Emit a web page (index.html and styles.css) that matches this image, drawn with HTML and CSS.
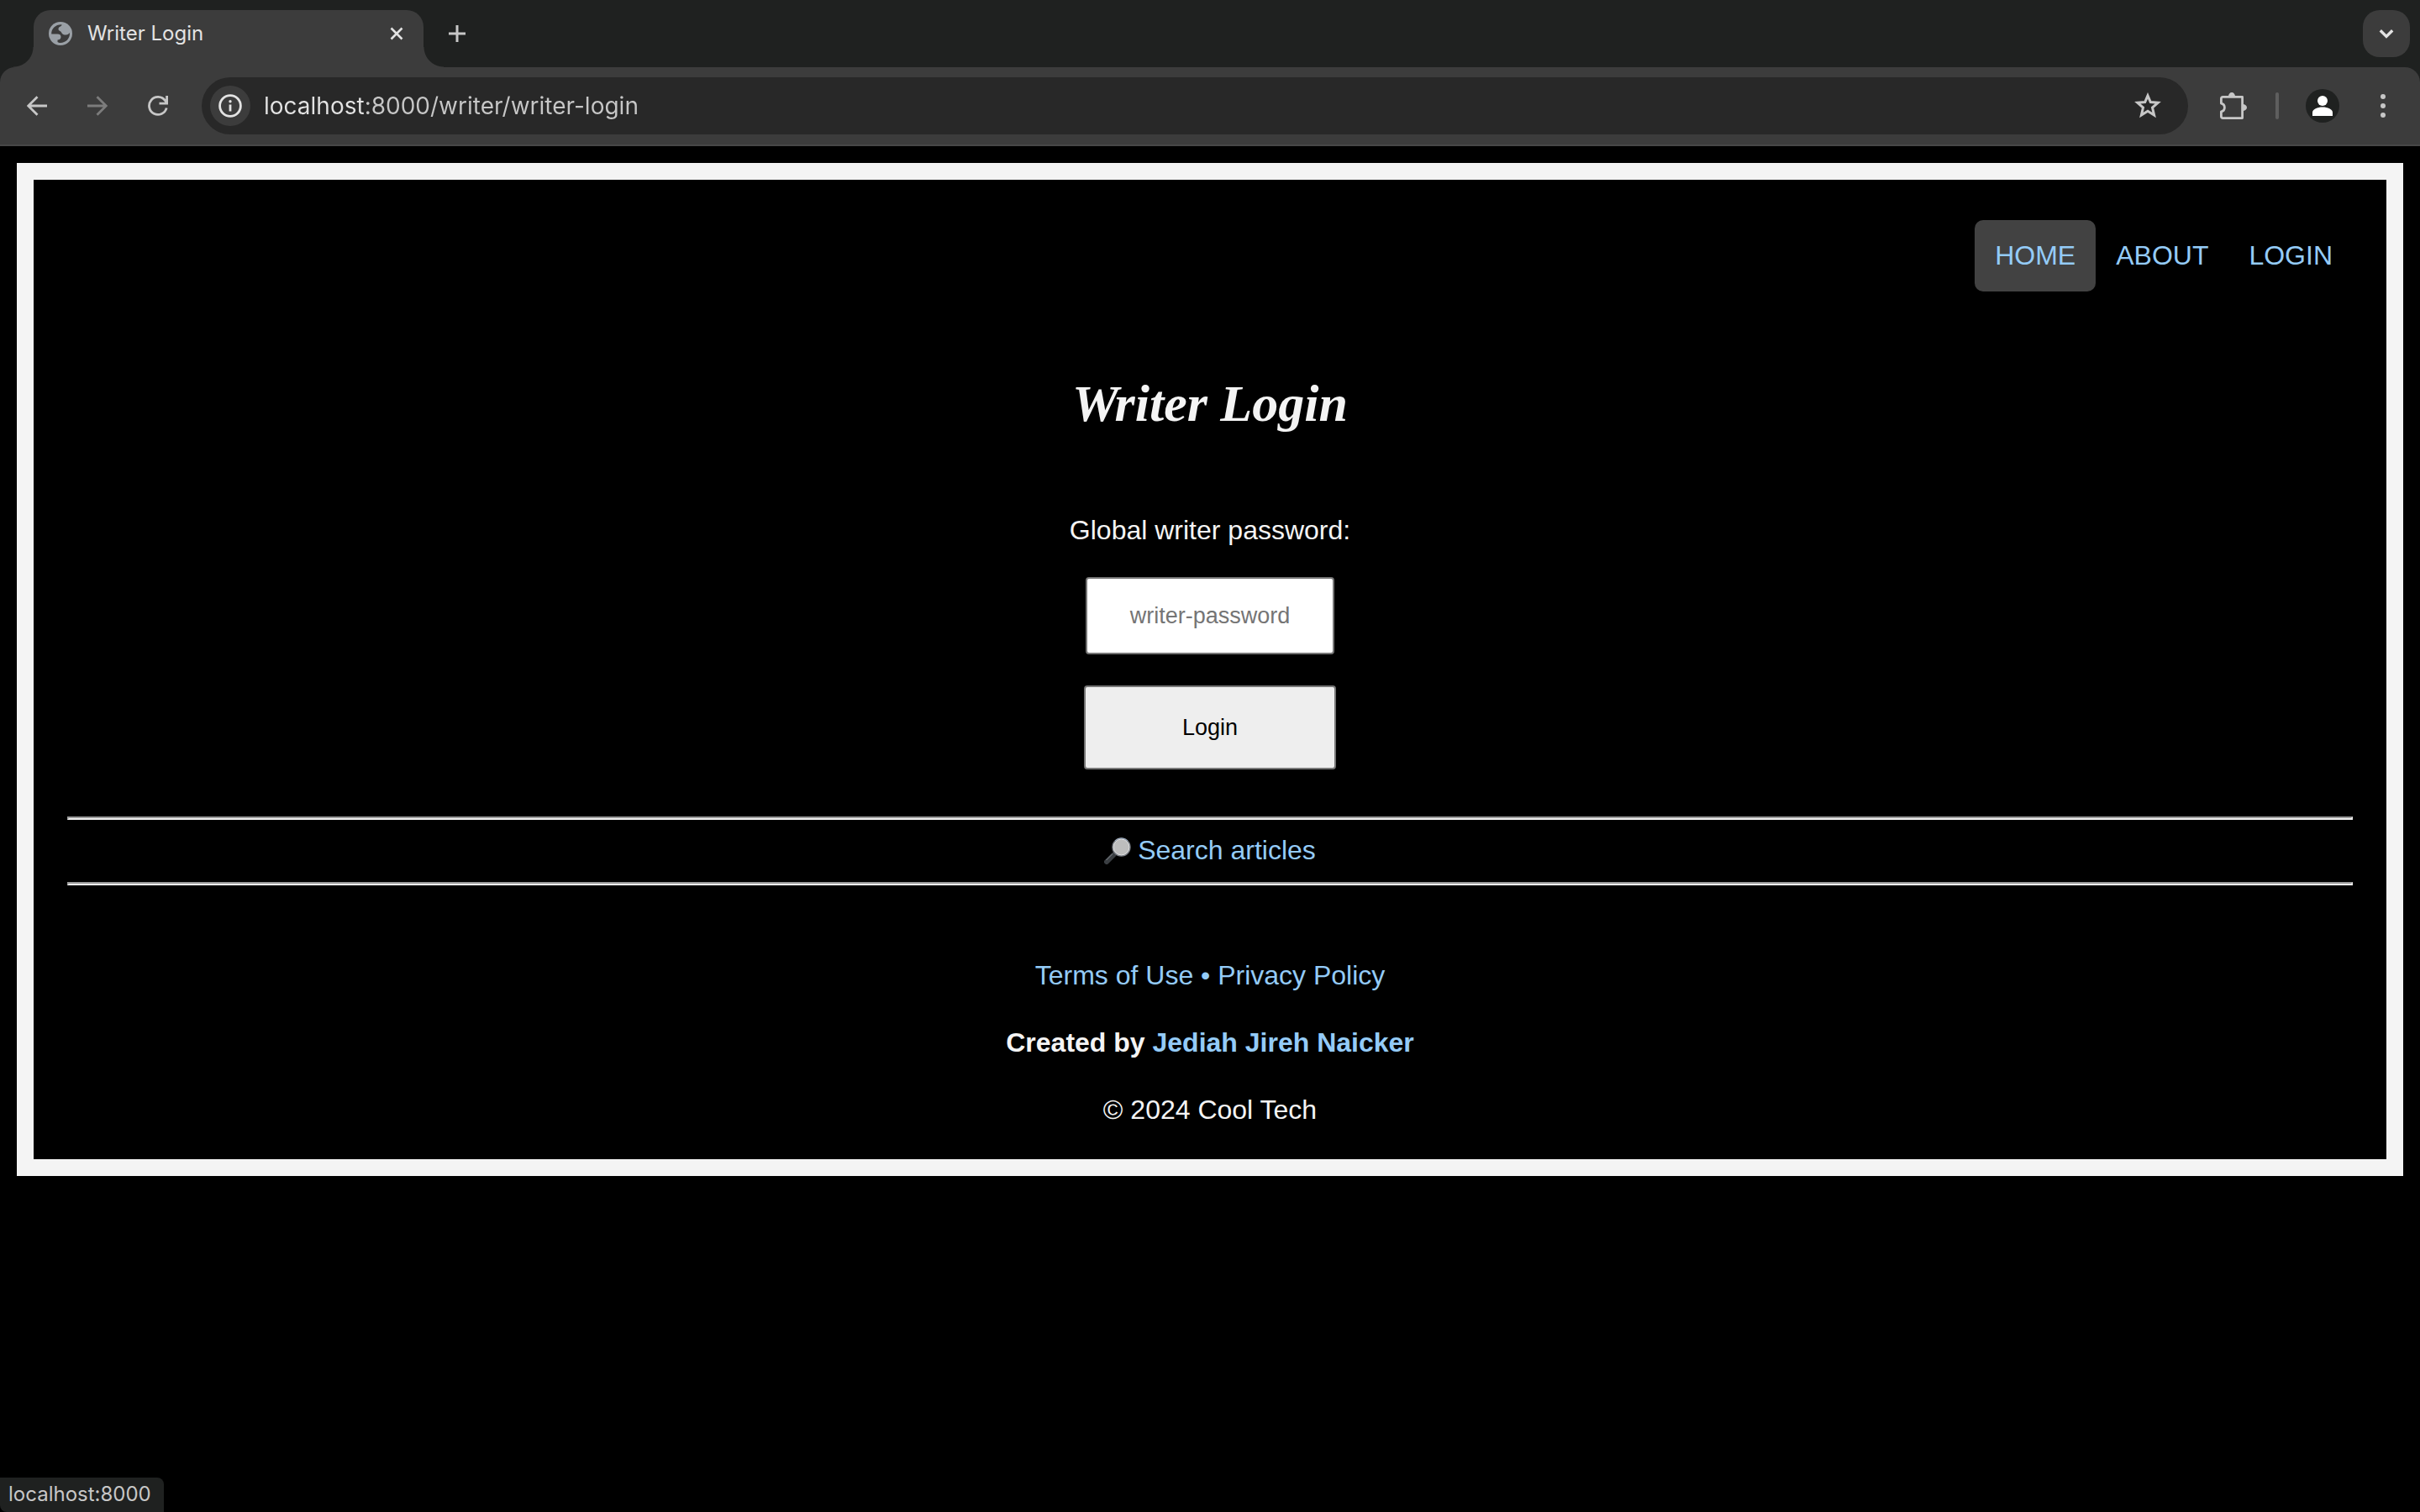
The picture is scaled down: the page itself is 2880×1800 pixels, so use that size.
FILE: index.html
```html
<!DOCTYPE html>
<html lang="en">
<head>
<meta charset="utf-8">
<title>Writer Login</title>
<link rel="stylesheet" href="styles.css">
</head>
<body>
<header class="browser">
  <div class="tab-strip">
    <div class="tab">
      <svg class="tab-favicon" width="28" height="28" viewBox="0 0 28 28" aria-hidden="true">
        <circle cx="14" cy="14" r="14" fill="#9aa0a6"/>
        <path d="M15.5 3.2C15.5 6 11.5 5 11.5 8.5C11.5 11 14 10.5 15 12.5C16 15 18 15.500 20.500 15.500C22.500 15.500 24 14 25 13C25.500 20 20 25 14 25C12.500 25 11 24.500 10.500 24L10.500 21.500C12.500 21.500 14.500 20.500 14.500 18C14.500 15.500 13 14.500 10.500 14.500L3.200 14.500C3 8 8 3 15.500 3.200Z" fill="#3c3c3c"/>
      </svg>
      <span class="tab-title">Writer Login</span>
      <button class="icon-button" type="button" aria-label="Close tab">
        <svg width="16" height="16" viewBox="0 0 16 16"><path d="M1.500 1.500L14.500 14.500M14.500 1.500L1.500 14.500" fill="none" stroke="#e3e3e3" stroke-width="2.600"/></svg>
      </button>
    </div>
    <button class="icon-button new-tab" type="button" aria-label="New tab">
      <svg width="24" height="24" viewBox="0 0 24 24"><path d="M12 2V22M2 12H22" fill="none" stroke="#c7c7c7" stroke-width="3"/></svg>
    </button>
    <button class="icon-button tab-search" type="button" aria-label="Search tabs">
      <svg width="24" height="24" viewBox="0 0 24 24"><path d="M4.800 8.200L12 15.400L19.200 8.200" fill="none" stroke="#e3e3e3" stroke-width="3.400"/></svg>
    </button>
  </div>
  <div class="toolbar">
    <nav class="history" aria-label="History">
      <button class="icon-button" type="button" aria-label="Back">
        <svg width="24" height="24" viewBox="0 0 24 24"><path d="M24 12H2.500M12.500 1.200L1.700 12L12.500 22.800" fill="none" stroke="#c7c7c7" stroke-width="2.800"/></svg>
      </button>
      <button class="icon-button" type="button" aria-label="Forward">
        <svg width="24" height="24" viewBox="0 0 24 24"><path d="M0 12H21.500M11.500 1.200L22.300 12L11.500 22.800" fill="none" stroke="#7c7c7c" stroke-width="2.800"/></svg>
      </button>
      <button class="icon-button" type="button" aria-label="Reload">
        <svg width="24" height="24" viewBox="0 0 24 24"><path d="M22.200 14.500A10.500 10.500 0 1 1 20.500 5.700L22.500 8.500M22.600 0V9.200H13.500" fill="none" stroke="#c7c7c7" stroke-width="2.800"/></svg>
      </button>
    </nav>
    <div class="address-bar">
      <button class="icon-button site-info" type="button" aria-label="View site information">
        <svg width="28" height="28" viewBox="0 0 28 28"><circle cx="14" cy="14" r="12.400" fill="none" stroke="#e3e3e3" stroke-width="2.800"/><path d="M14 12.500V20.500" stroke="#e3e3e3" stroke-width="2.800"/><circle cx="14" cy="8.800" r="1.700" fill="#e3e3e3"/></svg>
      </button>
      <input class="address" type="text" aria-label="Address" value="localhost:8000/writer/writer-login">
      <button class="icon-button" type="button" aria-label="Bookmark this page">
        <svg width="32" height="32" viewBox="0 0 32 32"><path d="M16 3.800L19.300 11.600L28.200 12.300L21.500 18.100L23.600 27L16 22.300L8.400 27L10.500 18.100L3.800 12.300L12.700 11.600Z" fill="none" stroke="#c7c7c7" stroke-width="3"/></svg>
      </button>
    </div>
    <button class="icon-button extensions" type="button" aria-label="Extensions">
      <svg width="32" height="32" viewBox="0 0 32 32"><path d="M3.400 5.400H26.600V30.600H3.400Q1.400 30.600 1.400 28.600V22.900A5 5 0 0 0 1.400 13.100V7.400Q1.400 5.400 3.400 5.400Z" fill="none" stroke="#c7c7c7" stroke-width="2.800" stroke-linejoin="round"/><path d="M10 5A4 5 0 0 1 18 5ZM27 14A5 4 0 0 1 27 22Z" fill="#c7c7c7"/></svg>
    </button>
    <span class="toolbar-divider"></span>
    <button class="icon-button profile" type="button" aria-label="Profile">
      <svg width="40" height="40" viewBox="0 0 40 40"><circle cx="20" cy="20" r="20" fill="#1f2120"/><circle cx="20" cy="14" r="6" fill="#fff"/><path d="M8 32V28C8 24 14 21.500 20 21.500S32 24 32 28V32Z" fill="#fff"/></svg>
    </button>
    <button class="icon-button" type="button" aria-label="Menu">
      <svg width="24" height="32" viewBox="0 0 24 32"><g fill="#c7c7c7"><circle cx="12" cy="5" r="3"/><circle cx="12" cy="16" r="3"/><circle cx="12" cy="27" r="3"/></g></svg>
    </button>
  </div>
</header>

<div class="page">
  <div class="frame">
    <nav class="site-nav" aria-label="Main">
      <a class="nav-link nav-link-active" href="/">HOME</a>
      <a class="nav-link" href="/about">ABOUT</a>
      <a class="nav-link" href="/login">LOGIN</a>
    </nav>
    <main>
      <h1 class="title">Writer Login</h1>
      <form class="login-form">
        <label for="writer-password">Global writer password:</label>
        <input class="field" id="writer-password" type="password" placeholder="writer-password">
        <button class="submit" type="submit">Login</button>
      </form>
    </main>
    <hr class="rule">
    <div class="search">
      <svg width="32" height="32" viewBox="0 0 32 32" aria-hidden="true">
        <path d="M11.500 20.500L14 18" stroke="#999" stroke-width="3"/>
        <path d="M3 29L11.500 20.500" stroke="#3a3e42" stroke-width="6" stroke-linecap="round"/>
        <path d="M2.500 27L10 19.500" stroke="#858b91" stroke-width="1"/>
        <circle cx="20.500" cy="11.500" r="10.400" fill="#bdbdbd" stroke="#777b82" stroke-width="1.600"/>
        <circle cx="20.500" cy="11.500" r="9.400" fill="none" stroke="#dedede" stroke-width="1"/>
        <path d="M13 4A10.500 10.500 0 0 1 28 4" fill="none" stroke="#a3b5cc" stroke-width="1"/>
      </svg>
      <a href="/search">Search articles</a>
    </div>
    <hr class="rule">
    <footer class="site-footer">
      <p><a href="/terms">Terms of Use</a> <a href="/privacy">• Privacy Policy</a></p>
      <p class="credit">Created by <a href="/author">Jediah Jireh Naicker</a></p>
      <p>© 2024 Cool Tech</p>
    </footer>
  </div>
</div>
<div class="status">localhost:8000</div>
</body>
</html>
```
FILE: styles.css
```css
* {
  box-sizing: border-box;
}

body {
  margin: 0;
  min-height: 100vh;
  background: #000;
  color: #f4f4f4;
  font: 32px/37px "Liberation Sans", Helvetica, Arial, sans-serif;
}

a {
  color: #94cbf7;
  text-decoration: none;
}

/* Browser window */

.browser {
  background: #1f2120;
  font-family: Inter, sans-serif;
}

.icon-button {
  display: flex;
  align-items: center;
  justify-content: center;
  padding: 0;
  border: 0;
  background: none;
}

.tab-strip {
  display: flex;
  align-items: center;
  padding: 12px 12px 0 40px;
}

.tab {
  position: relative;
  display: flex;
  align-items: center;
  width: 464px;
  height: 68px;
  padding: 0 24px 12px 18px;
  border-radius: 20px 20px 0 0;
  background: #3c3c3c;
}

.tab::before,
.tab::after {
  content: "";
  position: absolute;
  bottom: 0;
  width: 24px;
  height: 24px;
}

.tab::before {
  right: 100%;
  background: radial-gradient(circle at 0 0, transparent 23px, #3c3c3c 24px);
}

.tab::after {
  left: 100%;
  background: radial-gradient(circle at 100% 0, transparent 23px, #3c3c3c 24px);
}

.tab-title {
  flex: 1;
  margin-left: 18px;
  color: #e3e3e3;
  font-size: 24px;
  line-height: 32px;
}

.new-tab {
  height: 56px;
  margin: 0 auto 12px 28px;
}

.tab-search {
  width: 56px;
  height: 56px;
  margin-bottom: 12px;
  border-radius: 20px;
  background: #3c3c3c;
}

.toolbar {
  display: flex;
  align-items: center;
  padding: 12px 32px 12px 8px;
  border-bottom: 2px solid #474747;
  border-radius: 18px 18px 0 0;
  background: #3c3c3c;
}

.history {
  display: flex;
  margin-right: 16px;
}

.history .icon-button {
  width: 72px;
  height: 68px;
}

.address-bar {
  flex: 1;
  display: flex;
  align-items: center;
  height: 68px;
  padding: 0 32px 0 10px;
  border-radius: 34px;
  background: #282828;
}

.site-info {
  width: 48px;
  height: 48px;
  border-radius: 50%;
  background: #3c3c3c;
}

.address {
  flex: 1;
  height: 40px;
  margin-left: 16px;
  padding: 0;
  border: 0;
  /* The host name is drawn brighter than the rest of the address. */
  background: linear-gradient(to right, #e3e3e3 120px, #c7c7c7 120px);
  background-clip: text;
  color: #c7c7c7;
  -webkit-text-fill-color: transparent;
  font: 28px/40px Inter, sans-serif;
}

.extensions {
  margin-left: 38px;
}

.toolbar-divider {
  width: 4px;
  height: 32px;
  margin: 0 32px 0 34px;
  border-radius: 2px;
  background: #5e5e5e;
}

.profile {
  margin-right: 40px;
}

.status {
  position: fixed;
  bottom: 0;
  left: 0;
  padding: 4px 15px 5px 10px;
  border-radius: 0 8px 0 8px;
  background: #1f2120;
  color: #c7c7c7;
  font: 24px/32px Inter, sans-serif;
}

/* Site */

.page {
  padding: 20px;
}

.frame {
  padding: 48px 40px 40px;
  border: 20px solid #f4f4f4;
}

.site-nav {
  display: flex;
  justify-content: flex-end;
}

.nav-link {
  padding: 24px;
  border-radius: 10px;
}

.nav-link-active {
  background: #424242;
}

.title {
  margin: 96px 0;
  font: italic 700 62px/74px "Apple Chancery", Z003, "URW Chancery L", "Liberation Serif", serif;
  text-align: center;
}

.login-form {
  display: flex;
  flex-direction: column;
  align-items: center;
  gap: 37px;
  margin-bottom: 56px;
}

.field,
.submit {
  border: 2px solid #767676;
  border-radius: 4px;
  font: 27px/32px "Liberation Sans", Arial, sans-serif;
  text-align: center;
}

.field {
  width: 296px;
  height: 92px;
  background: #fff;
  color: #000;
}

.field::placeholder {
  color: #757575;
}

.submit {
  width: 300px;
  height: 100px;
  background: #eee;
  color: #000;
}

.rule {
  margin: 0;
  border: 2px solid;
  border-color: #9a9a9a #eee #eee #9a9a9a;
}

.search {
  display: flex;
  align-items: center;
  justify-content: center;
  gap: 8px;
  padding: 18px 0 19px;
}

.site-footer {
  display: flex;
  flex-direction: column;
  gap: 43px;
  margin-top: 89px;
  text-align: center;
}

.site-footer p {
  margin: 0;
}

.site-footer .credit {
  font-weight: 700;
}
```
